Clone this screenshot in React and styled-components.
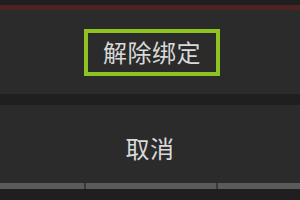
import React from 'react';
import styled, { createGlobalStyle } from 'styled-components';

const GlobalStyle = createGlobalStyle`
	html, body {
		margin: 0;
		padding: 0;
		background-color: #1f1f1f;
		font-family: "Noto Sans CJK SC", "Noto Sans", sans-serif;
	}
`;

const Screen = styled.div`
	width: 300px;
	height: 200px;
	display: flex;
	flex-direction: column;
	background-color: #1f1f1f;
	overflow: hidden;
`;

const TopStrip = styled.div`
	height: 5px;
	flex-shrink: 0;
`;

const AccentLine = styled.div`
	height: 5px;
	flex-shrink: 0;
	background-color: #4f2224;
`;

const Panel = styled.div`
	height: ${(p) => p.h}px;
	flex-shrink: 0;
	background-color: #2b2b2b;
	display: flex;
	align-items: center;
	justify-content: center;
	padding-top: ${(p) => p.pt || 0}px;
	box-sizing: border-box;
`;

const Gap = styled.div`
	height: 11px;
	flex-shrink: 0;
`;

const Label = styled.span`
	font-size: 24px;
	line-height: 1;
	color: #d9d9d9;
	letter-spacing: 0.5px;
`;

const FocusBox = styled.div`
	width: 136px;
	height: 47px;
	box-sizing: border-box;
	border: 4px solid #8fc31f;
	display: flex;
	align-items: center;
	justify-content: center;
	margin-left: 4px;
	padding-bottom: 1px;
`;

const TabBar = styled.div`
	height: 6px;
	flex-shrink: 0;
	display: flex;
	gap: 2px;
	background-color: #3a3a3a;
`;

const Tab = styled.div`
	width: ${(p) => p.w}px;
	background-color: #5b5b5b;
`;

export default function App() {
	return (
		<>
			<GlobalStyle />
			<Screen>
				<TopStrip />
				<AccentLine />
				<Panel h={84}>
					<FocusBox>
						<Label>解除绑定</Label>
					</FocusBox>
				</Panel>
				<Gap />
				<Panel h={78} pt={7}>
					<Label>取消</Label>
				</Panel>
				<TabBar>
					<Tab w={84} />
					<Tab w={130} />
					<Tab w={82} />
				</TabBar>
			</Screen>
		</>
	);
}
